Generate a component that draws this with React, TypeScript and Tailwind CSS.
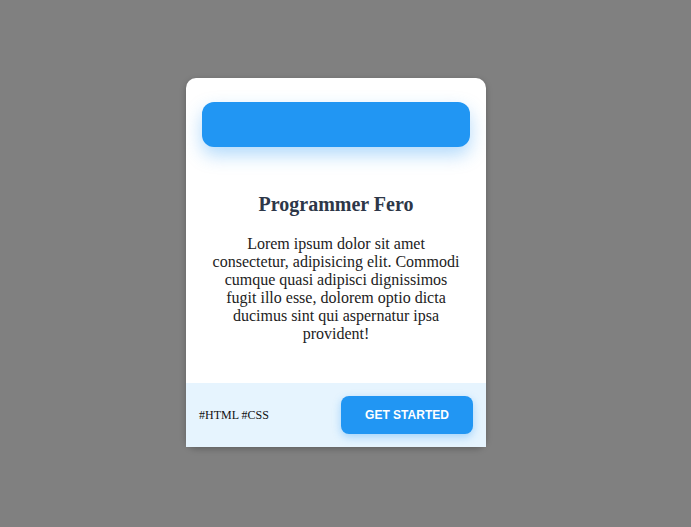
export default function App() {
  return (
    <div className="min-h-screen bg-[#808080] flex items-center justify-center pr-[19px] pb-[2px]">
      <div className="w-[300px] bg-white rounded-[10px] shadow-[0_2px_6px_rgba(0,0,0,0.25)] font-['Liberation_Serif',serif]">
        {/* Header bar */}
        <div className="px-4 pt-6">
          <div className="h-[45px] rounded-[12px] bg-[#2196f3] shadow-[0_8px_18px_rgba(33,150,243,0.35)]" />
        </div>

        {/* Content */}
        <div className="px-[24px] pt-[46px] pb-[40px] text-center">
          <h2 className="text-[20px] leading-[23px] font-bold text-[#2d3748]">Programmer Fero</h2>
          <p className="mt-[19px] text-[16px] leading-[18px] text-[#222]">
            Lorem ipsum dolor sit amet consectetur, adipisicing elit. Commodi cumque quasi adipisci dignissimos fugit illo esse, dolorem optio dicta ducimus sint qui aspernatur ipsa provident!
          </p>
        </div>

        {/* Footer */}
        <div className="h-[64px] bg-[#e6f4fe] flex items-center justify-between px-[13px]">
          <span className="text-[12px] text-[#111]">#HTML #CSS</span>
          <button className="w-[132px] h-[38px] rounded-[8px] bg-[#2196f3] text-white text-[12px] font-bold font-['Liberation_Sans',sans-serif] shadow-[0_3px_8px_rgba(33,150,243,0.35)]">
            GET STARTED
          </button>
        </div>
      </div>
    </div>
  );
}
